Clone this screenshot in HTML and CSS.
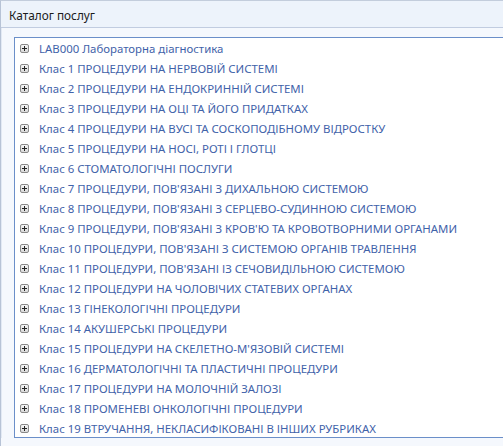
FILE: index.html
```html
<!DOCTYPE html>
<html lang="uk">
<head>
<meta charset="utf-8">
<title>Каталог послуг</title>
<link rel="stylesheet" href="styles.css">
</head>
<body>
<div class="window">
  <div class="header">Каталог послуг</div>
  <div class="content">
    <ul class="tree">
      <li class="node"><span class="expander"></span><span class="label">LAB000 Лабораторна діагностика</span></li>
      <li class="node"><span class="expander"></span><span class="label">Клас 1 ПРОЦЕДУРИ НА НЕРВОВІЙ СИСТЕМІ</span></li>
      <li class="node"><span class="expander"></span><span class="label">Клас 2 ПРОЦЕДУРИ НА ЕНДОКРИННІЙ СИСТЕМІ</span></li>
      <li class="node"><span class="expander"></span><span class="label">Клас 3 ПРОЦЕДУРИ НА ОЦІ ТА ЙОГО ПРИДАТКАХ</span></li>
      <li class="node"><span class="expander"></span><span class="label">Клас 4 ПРОЦЕДУРИ НА ВУСІ ТА СОСКОПОДІБНОМУ ВІДРОСТКУ</span></li>
      <li class="node"><span class="expander"></span><span class="label">Клас 5 ПРОЦЕДУРИ НА НОСІ, РОТІ І ГЛОТЦІ</span></li>
      <li class="node"><span class="expander"></span><span class="label">Клас 6 СТОМАТОЛОГІЧНІ ПОСЛУГИ</span></li>
      <li class="node"><span class="expander"></span><span class="label">Клас 7 ПРОЦЕДУРИ, ПОВ'ЯЗАНІ З ДИХАЛЬНОЮ СИСТЕМОЮ</span></li>
      <li class="node"><span class="expander"></span><span class="label">Клас 8 ПРОЦЕДУРИ, ПОВ'ЯЗАНІ З СЕРЦЕВО-СУДИННОЮ СИСТЕМОЮ</span></li>
      <li class="node"><span class="expander"></span><span class="label">Клас 9 ПРОЦЕДУРИ, ПОВ'ЯЗАНІ З КРОВ'Ю ТА КРОВОТВОРНИМИ ОРГАНАМИ</span></li>
      <li class="node"><span class="expander"></span><span class="label">Клас 10 ПРОЦЕДУРИ, ПОВ'ЯЗАНІ З СИСТЕМОЮ ОРГАНІВ ТРАВЛЕННЯ</span></li>
      <li class="node"><span class="expander"></span><span class="label">Клас 11 ПРОЦЕДУРИ, ПОВ'ЯЗАНІ ІЗ СЕЧОВИДІЛЬНОЮ СИСТЕМОЮ</span></li>
      <li class="node"><span class="expander"></span><span class="label">Клас 12 ПРОЦЕДУРИ НА ЧОЛОВІЧИХ СТАТЕВИХ ОРГАНАХ</span></li>
      <li class="node"><span class="expander"></span><span class="label">Клас 13 ГІНЕКОЛОГІЧНІ ПРОЦЕДУРИ</span></li>
      <li class="node"><span class="expander"></span><span class="label">Клас 14 АКУШЕРСЬКІ ПРОЦЕДУРИ</span></li>
      <li class="node"><span class="expander"></span><span class="label">Клас 15 ПРОЦЕДУРИ НА СКЕЛЕТНО-М'ЯЗОВІЙ СИСТЕМІ</span></li>
      <li class="node"><span class="expander"></span><span class="label">Клас 16 ДЕРМАТОЛОГІЧНІ ТА ПЛАСТИЧНІ ПРОЦЕДУРИ</span></li>
      <li class="node"><span class="expander"></span><span class="label">Клас 17 ПРОЦЕДУРИ НА МОЛОЧНІЙ ЗАЛОЗІ</span></li>
      <li class="node"><span class="expander"></span><span class="label">Клас 18 ПРОМЕНЕВІ ОНКОЛОГІЧНІ ПРОЦЕДУРИ</span></li>
      <li class="node"><span class="expander"></span><span class="label">Клас 19 ВТРУЧАННЯ, НЕКЛАСИФІКОВАНІ В ІНШИХ РУБРИКАХ</span></li>
    </ul>
  </div>
</div>
</body>
</html>
```
FILE: styles.css
```css
html, body {
  margin: 0;
  padding: 0;
  background: #f5f8fd;
  font-family: "Noto Sans", "Open Sans", sans-serif;
  font-size: 11.4px;
  overflow: hidden;
}

.window {
  height: 446px;
  border-left: 1px solid #b7c3d6;
  border-top: 1px solid #c3cddc;
  box-sizing: border-box;
}

.header {
  height: 27px;
  box-sizing: border-box;
  background: #edf3fb;
  border-bottom: 1px solid #c1cce0;
  padding-left: 8px;
  padding-top: 1px;
  line-height: 26px;
  font-size: 11.8px;
  color: #1b1b1b;
}

.content {
  padding: 9px 0 0 12px;
  border-left: 1px solid #e2e9f4;
}

.tree {
  list-style: none;
  margin: 0;
  padding: 0;
  height: 401px;
  box-sizing: border-box;
  overflow: hidden;
  background: #ffffff;
  border: 1px solid #6b8fc9;
  border-right: none;
}

.node {
  display: flex;
  align-items: center;
  height: 20px;
  padding-left: 5px;
  white-space: nowrap;
}

.expander {
  width: 9px;
  height: 9px;
  box-sizing: border-box;
  border: 1px solid #8a8a8a;
  border-radius: 2px;
  background: linear-gradient(#f6f6f6, #d9d9d9);
  position: relative;
  flex: none;
  margin-right: 10px;
}

.expander::before,
.expander::after {
  content: "";
  position: absolute;
  background: #222;
}

.expander::before {
  left: 1px;
  top: 3px;
  width: 5px;
  height: 1px;
}

.expander::after {
  left: 3px;
  top: 1px;
  width: 1px;
  height: 5px;
}

.label {
  color: #3f62a9;
}
```
